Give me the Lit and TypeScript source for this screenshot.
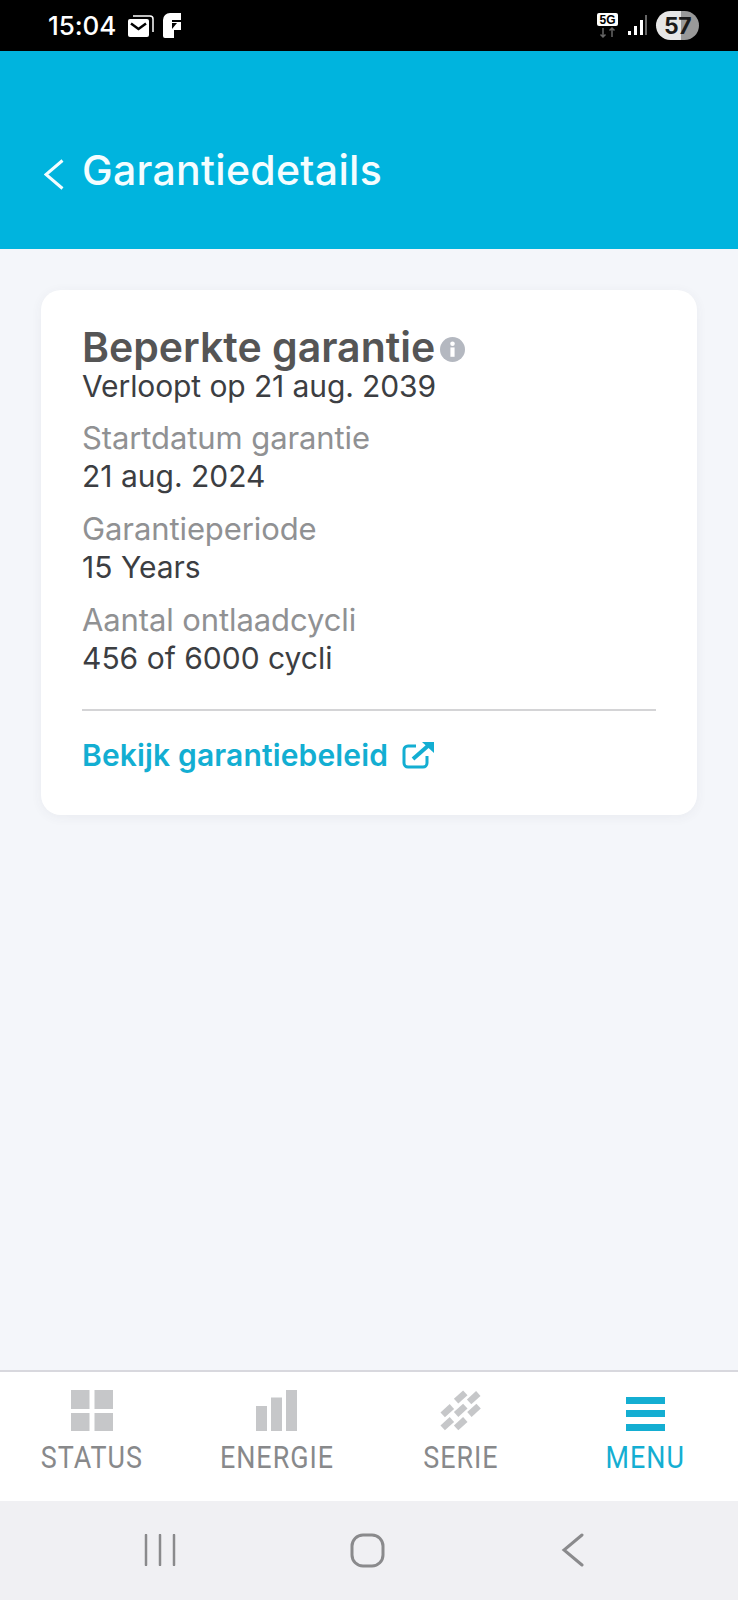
import { LitElement, html, css, svg } from "lit";
import { customElement } from "lit/decorators.js";

const bricks = [
  [23.7, 8],
  [36.7, 8.7],
  [10.3, 21.7],
  [23.7, 21.3],
  [37, 21.3],
  [10.3, 34.7],
  [23.7, 34.7],
];

const navItems = [
  {
    label: "STATUS",
    icon: svg`<rect x="3" y="1" width="18.500" height="19" /><rect x="26.500" y="1" width="18.500" height="19" /><rect x="3" y="24" width="18.500" height="18" /><rect x="26.500" y="24" width="18.500" height="18" />`,
  },
  {
    label: "ENERGIE",
    icon: svg`<rect x="3" y="17" width="11" height="25" /><rect x="18" y="8.500" width="11" height="33.500" /><rect x="33" y="1" width="11" height="41" />`,
  },
  {
    label: "SERIE",
    icon: bricks.map(
      ([x, y]) => svg`<rect x=${x - 6.2} y=${y - 3.3} width="12.400" height="6.600" transform="rotate(-42 ${x} ${y})" />`,
    ),
  },
  {
    label: "MENU",
    active: true,
    icon: svg`<rect x="4" y="8" width="39" height="7" /><rect x="4" y="21" width="39" height="7" /><rect x="4" y="35" width="39" height="7" />`,
  },
];

const fields = [
  { label: "Startdatum garantie", value: "21 aug. 2024" },
  { label: "Garantieperiode", value: "15 Years" },
  { label: "Aantal ontlaadcycli", value: "456 of 6000 cycli" },
];

@customElement("app-root")
export class AppRoot extends LitElement {
  static styles = css`
    :host {
      display: flex;
      flex-direction: column;
      width: 738px;
      height: 1600px;
      background: #f4f6fa;
      font-family: Inter, "Noto Sans", sans-serif;
      overflow: hidden;
    }

    .status-bar {
      flex: none;
      height: 51px;
      box-sizing: border-box;
      padding: 0 39px 0 48px;
      display: flex;
      align-items: center;
      background: #000;
      color: #fff;
    }
    .time {
      font-size: 26px;
      font-weight: 500;
      letter-spacing: -0.1px;
      margin-right: 11px;
    }
    .status-left,
    .status-right {
      display: flex;
      align-items: center;
    }
    .status-right {
      margin-left: auto;
      gap: 9px;
    }
    .battery {
      width: 43px;
      height: 29px;
      border-radius: 15px;
      background: linear-gradient(90deg, #e6e6e6 0 58%, #999 58% 100%);
      color: #1a1a1a;
      font-size: 23px;
      font-weight: 700;
      letter-spacing: -0.5px;
      display: flex;
      align-items: center;
      justify-content: center;
    }

    .header {
      flex: none;
      height: 198px;
      box-sizing: border-box;
      padding: 92px 0 0 44px;
      background: #00b4de;
      color: #f4fdff;
      display: flex;
      align-items: flex-start;
      gap: 18px;
    }
    .back {
      margin-top: 16px;
    }
    .title {
      font-size: 41px;
      line-height: 54px;
      font-weight: 500;
      letter-spacing: 0.3px;
    }

    main {
      flex: 1;
      padding: 41px 41px 0;
    }
    .card {
      height: 525px;
      box-sizing: border-box;
      padding: 35px 41px 0;
      background: #fff;
      border-radius: 20px;
      box-shadow: 0 2px 12px rgba(60, 70, 90, 0.06);
    }
    .card-title {
      display: flex;
      align-items: center;
      gap: 5px;
      font-size: 41px;
      line-height: 44px;
      font-weight: 600;
      color: #555;
    }
    .info {
      margin-top: 5px;
    }
    .expires {
      font-size: 30px;
      line-height: 34px;
      padding-bottom: 1px;
      color: #3c3e42;
      letter-spacing: -0.1px;
    }
    .field {
      margin-top: 15px;
    }
    .label {
      font-size: 31px;
      line-height: 38px;
      letter-spacing: -0.1px;
      color: #909193;
    }
    .value {
      font-size: 30px;
      line-height: 38px;
      color: #3c3e42;
    }
    .divider {
      height: 2px;
      margin-top: 32px;
      background: #d4d4d6;
    }
    .link {
      display: flex;
      align-items: center;
      gap: 14px;
      margin-top: 25px;
      font-size: 30px;
      line-height: 38px;
      font-weight: 600;
      color: #13aed2;
      letter-spacing: 0.15px;
    }

    nav {
      flex: none;
      height: 131px;
      box-sizing: border-box;
      border-top: 2px solid #d8d8de;
      background: #fff;
      display: grid;
      grid-template-columns: repeat(4, 1fr);
    }
    .tab {
      display: flex;
      flex-direction: column;
      align-items: center;
      padding-top: 17px;
      color: #88898b;
    }
    .tab svg {
      fill: #c6c7c9;
    }
    .tab.active {
      color: #14aed2;
    }
    .tab.active svg {
      fill: #14aed2;
    }
    .tab span {
      margin-top: 7px;
      font-family: Roboto, sans-serif;
      font-size: 32px;
      line-height: 36px;
      letter-spacing: 1.2px;
      transform: scaleX(0.84);
    }

    .system-nav {
      flex: none;
      height: 99px;
      box-sizing: border-box;
      padding: 0 0 1px 144px;
      background: #f0f0f3;
      display: flex;
      align-items: center;
      gap: 174px;
    }
    .system-back {
      margin-left: 2px;
    }
  `;

  render() {
    return html`
      <div class="status-bar">
        <div class="status-left">
          <span class="time">15:04</span>
          <svg width="28" height="24" viewBox="0 0 28 24">
            <path d="M1 7a2 2 0 0 1 2-2h17a2 2 0 0 1 2 2v14a2 2 0 0 1-2 2H3a2 2 0 0 1-2-2z" fill="#fff" />
            <path d="M4 9.500l7.500 5.500 7.500-5.500" fill="none" stroke="#000" stroke-width="2.500" />
            <path d="M6 2h17a3 3 0 0 1 3 3v13" fill="none" stroke="#fff" stroke-width="1.500" />
          </svg>
          <svg style="margin-left:8px" width="18" height="25" viewBox="0 0 18 25">
            <path d="M0 7a7 7 0 0 1 7-7h11v7H9v2h9v8h-7v8H2a2 2 0 0 1-2-2z" fill="#fff" />
            <path d="M9 10h5l-5 6z" fill="#000" />
          </svg>
        </div>
        <div class="status-right">
          <svg width="22" height="26" viewBox="0 0 22 26">
            <rect x="0" y="0" width="21" height="13" rx="2" fill="#fff" />
            <path d="M6 15v9M3.500 21.500L6 24l2.500-2.500M15 24v-9M12.500 17.500L15 15l2.500 2.500" fill="none" stroke="#666" stroke-width="1.500" />
            <text x="10.500" y="11" text-anchor="middle" font-family="Liberation Sans" font-weight="700" font-size="12" fill="#000">5G</text>
          </svg>
          <svg width="19" height="21" viewBox="0 0 19 21">
            <rect x="0" y="16" width="3" height="4" fill="#fff" />
            <rect x="6" y="11" width="3" height="9" fill="#fff" />
            <rect x="12" y="5" width="3" height="15" fill="#fff" />
            <rect x="17" y="0" width="2" height="20" fill="#666" />
          </svg>
          <div class="battery">57</div>
        </div>
      </div>

      <div class="header">
        <svg class="back" width="20" height="31" viewBox="0 0 20 31">
          <path d="M18.500 1.500L2 15.500l16.500 14" fill="none" stroke="#f4fdff" stroke-width="3" />
        </svg>
        <div class="title">Garantiedetails</div>
      </div>

      <main>
        <div class="card">
          <div class="card-title">
            Beperkte garantie
            <svg class="info" width="25" height="25" viewBox="0 0 24 24">
              <circle cx="12" cy="12" r="12" fill="#b4b8c0" />
              <rect x="10" y="10" width="4" height="9" fill="#fff" />
              <circle cx="12" cy="6.500" r="2.200" fill="#fff" />
            </svg>
          </div>
          <div class="expires">Verloopt op 21 aug. 2039</div>
          ${fields.map(
            (f) => html`
              <div class="field">
                <div class="label">${f.label}</div>
                <div class="value">${f.value}</div>
              </div>
            `,
          )}
          <div class="divider"></div>
          <div class="link">
            Bekijk garantiebeleid
            <svg width="33" height="28" viewBox="0 0 33 28">
              <path d="M14 5H6a4 4 0 0 0-4 4v13a4 4 0 0 0 4 4h15a4 4 0 0 0 4-4v-7" fill="none" stroke="#13aed2" stroke-width="3" />
              <path d="M11 18L27 4" fill="none" stroke="#13aed2" stroke-width="4" />
              <path d="M20 1h12v11z" fill="#13aed2" />
            </svg>
          </div>
        </div>
      </main>

      <nav>
        ${navItems.map(
          (item) => html`
            <div class="tab ${item.active ? "active" : ""}">
              <svg width="48" height="43" viewBox="0 0 48 43">${item.icon}</svg>
              <span>${item.label}</span>
            </div>
          `,
        )}
      </nav>

      <div class="system-nav">
        <svg width="32" height="32" viewBox="0 0 32 32">
          <path d="M2 1v30M16 1v30M30 1v30" fill="none" stroke="#8a8a8c" stroke-width="2.500" stroke-linecap="round" />
        </svg>
        <svg width="35" height="35" viewBox="0 0 35 35">
          <rect x="2" y="2" width="31" height="31" rx="11" fill="none" stroke="#8a8a8c" stroke-width="3" />
        </svg>
        <svg class="system-back" width="24" height="34" viewBox="0 0 24 34">
          <path d="M21 2L3 17l18 15" fill="none" stroke="#8a8a8c" stroke-width="3" stroke-linecap="round" />
        </svg>
      </div>
    `;
  }
}
